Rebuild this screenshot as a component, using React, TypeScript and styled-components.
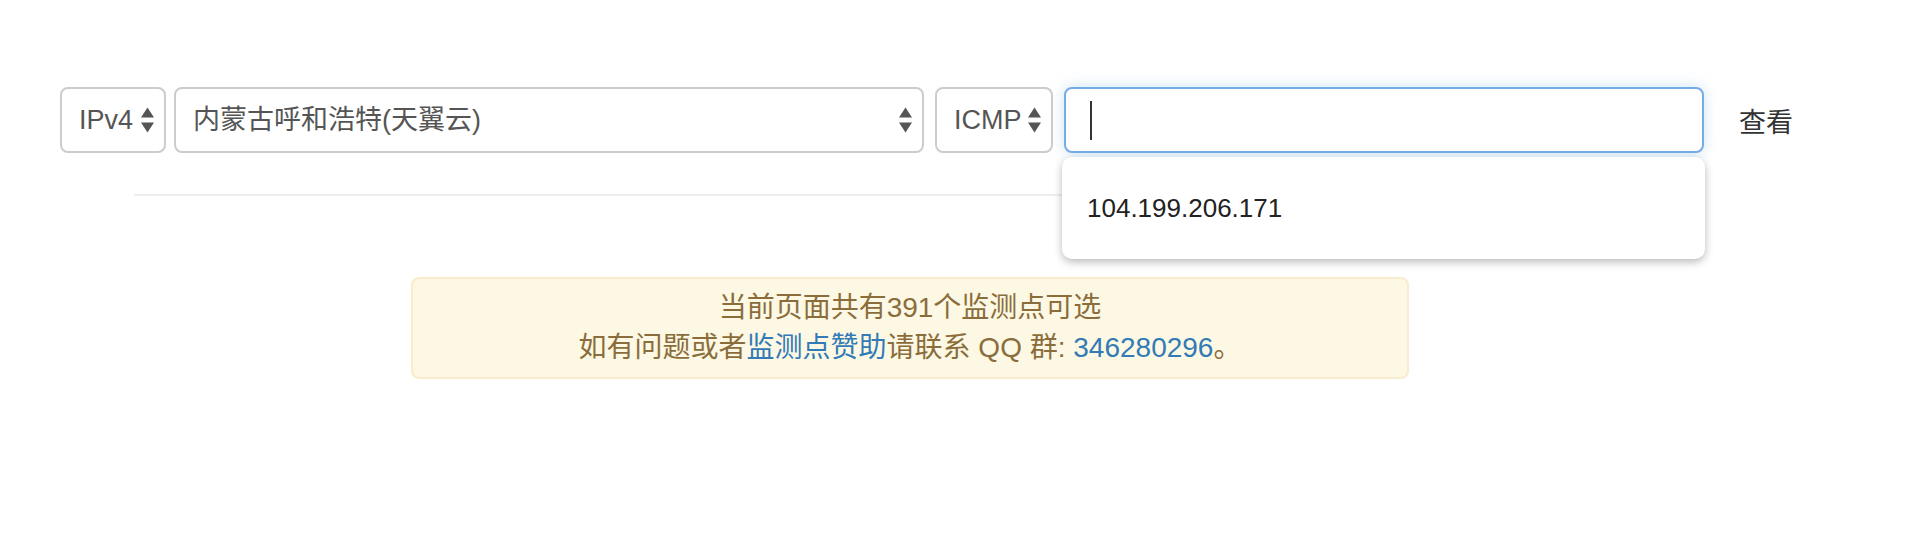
import React from 'react';
import styled, { createGlobalStyle } from 'styled-components';

const GlobalStyle = createGlobalStyle`
  html, body {
    margin: 0;
    padding: 0;
    background: #fff;
  }
  body {
    font-family: "Liberation Sans", "Noto Sans CJK SC", sans-serif;
    color: #333;
  }
`;

const Page = styled.div`
  padding-top: 87px;
  min-height: 556px;
  box-sizing: border-box;
`;

const QueryRow = styled.div`
  display: flex;
  align-items: center;
  padding-left: 60px;
  height: 66px;
`;

const SelectBox = styled.div<{ $width: number; $gap?: number }>`
  box-sizing: border-box;
  width: ${p => p.$width}px;
  height: 66px;
  margin-right: ${p => p.$gap ?? 8}px;
  padding: 0 10px 0 17px;
  display: flex;
  align-items: center;
  justify-content: space-between;
  border: 2px solid #ccc;
  border-radius: 8px;
  background: #fff;
  color: #555;
  font-size: 27px;
  white-space: nowrap;
`;

const SelectText = styled.span`
  line-height: 1;
`;

const SearchWrap = styled.div`
  position: relative;
  width: 640px;
  height: 66px;
`;

const SearchBox = styled.div`
  box-sizing: border-box;
  height: 66px;
  padding-left: 24px;
  display: flex;
  align-items: center;
  border: 2px solid #74ace3;
  border-radius: 8px;
  background: #fff;
  box-shadow: 0 0 14px rgba(102, 175, 233, 0.35);
`;

const Caret = styled.span`
  display: block;
  width: 2px;
  height: 39px;
  background: #333;
`;

const Suggestions = styled.ul`
  position: absolute;
  top: 70px;
  left: -2px;
  right: -1px;
  margin: 0;
  padding: 0;
  list-style: none;
  background: #fff;
  border-radius: 10px;
  box-shadow: 0 3px 8px rgba(0, 0, 0, 0.28);
  z-index: 10;
`;

const SuggestionItem = styled.li`
  height: 102px;
  display: flex;
  align-items: center;
  padding-left: 25px;
  font-size: 26px;
  color: #222;
`;

const QueryButton = styled.button`
  margin-left: 35px;
  padding: 0;
  border: none;
  background: none;
  font-family: inherit;
  font-size: 27px;
  color: #333;
  cursor: pointer;
`;

const Content = styled.div`
  margin-left: 134px;
  width: 1552px;
`;

const Divider = styled.hr`
  margin: 41px 0 0;
  border: none;
  border-top: 2px solid #eee;
`;

const Alert = styled.div`
  box-sizing: border-box;
  width: 998px;
  margin: 81px auto 0;
  padding: 9px 0;
  border: 2px solid #faebcc;
  border-radius: 8px;
  background: #fcf8e3;
  color: #8a6d3b;
  font-size: 28px;
  line-height: 40px;
  text-align: center;
`;

const AlertLink = styled.a`
  color: #337ab7;
  text-decoration: none;
`;

function Arrows() {
  return (
    <svg width="13" height="26" viewBox="0 0 13 26">
      <polygon points="0,10.5 6.5,0.5 13,10.5" fill="#555" />
      <polygon points="0,15.5 13,15.5 6.5,25.5" fill="#555" />
    </svg>
  );
}

export default function App() {
  return (
    <Page>
      <GlobalStyle />
      <QueryRow>
        <SelectBox $width={106}>
          <SelectText>IPv4</SelectText>
          <Arrows />
        </SelectBox>
        <SelectBox $width={750} $gap={11}>
          <SelectText>内蒙古呼和浩特(天翼云)</SelectText>
          <Arrows />
        </SelectBox>
        <SelectBox $width={118} $gap={11}>
          <SelectText>ICMP</SelectText>
          <Arrows />
        </SelectBox>
        <SearchWrap>
          <SearchBox>
            <Caret />
          </SearchBox>
          <Suggestions>
            <SuggestionItem>104.199.206.171</SuggestionItem>
          </Suggestions>
        </SearchWrap>
        <QueryButton>查看</QueryButton>
      </QueryRow>
      <Content>
        <Divider />
        <Alert>
          当前页面共有391个监测点可选
          <br />
          如有问题或者<AlertLink href="#">监测点赞助</AlertLink>请联系 QQ 群: <AlertLink href="#">346280296</AlertLink>。
        </Alert>
      </Content>
    </Page>
  );
}
